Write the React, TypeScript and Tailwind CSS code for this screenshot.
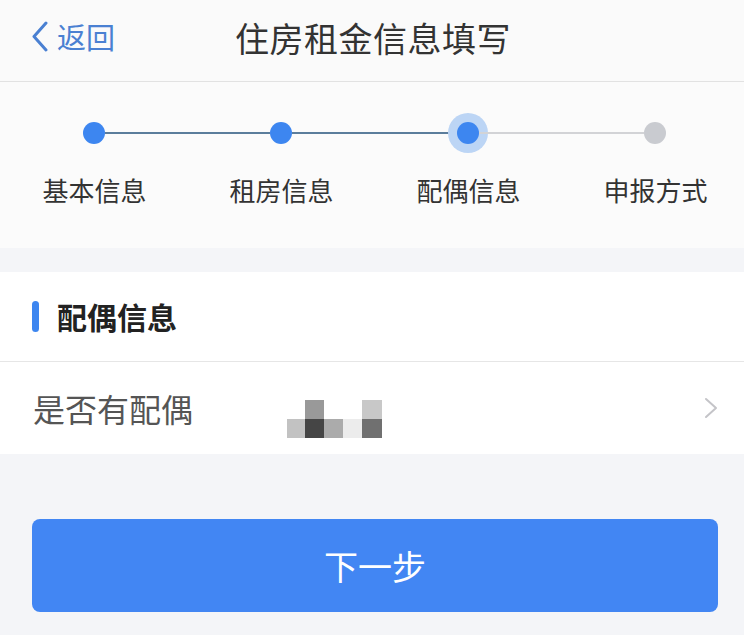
import React from "react";

const font = { fontFamily: '"Noto Sans CJK SC", "Noto Sans", sans-serif' };

function Dot({ state }: { state: "done" | "active" | "todo" }) {
  if (state === "todo") return <div className="w-[22px] h-[22px] rounded-full bg-[#c9cbd0] shrink-0" />;
  if (state === "active")
    return <div className="w-[22px] h-[22px] rounded-full bg-[#3d86f0] shrink-0 shadow-[0_0_0_9px_#bcd5f5]" />;
  return <div className="w-[22px] h-[22px] rounded-full bg-[#3d86f0] shrink-0" />;
}

export default function App() {
  const labels = ["基本信息", "租房信息", "配偶信息", "申报方式"];
  return (
    <div style={font} className="w-[744px] min-h-[635px] bg-[#f4f5f8] overflow-hidden">
      {/* Header */}
      <div className="h-[82px] pb-[8px] bg-[#fafafa] border-b border-[#e2e2e2] flex items-center relative">
        <div className="flex items-center pl-[31px] text-[#4a80d2] text-[29px] leading-none">
          <svg width="18" height="31" viewBox="0 0 18 31" className="mr-[8px]">
            <polyline points="15,2 3,15.5 15,29" fill="none" stroke="#4a80d2" strokeWidth="3" strokeLinejoin="round" strokeLinecap="round" />
          </svg>
          <span>返回</span>
        </div>
        <div className="absolute left-0 right-0 top-0 h-[75px] flex items-center justify-center pointer-events-none">
          <span className="text-[34px] text-[#333333] tracking-[0.5px] ml-[2px]">住房租金信息填写</span>
        </div>
      </div>

      {/* Steps */}
      <div className="bg-[#fbfbfb] pt-[40px] pb-[40px]">
        <div className="flex items-center pl-[83px] pr-[78px] h-[22px]">
          <Dot state="done" />
          <div className="flex-1 h-[2px] bg-[#5b7d9c]" />
          <Dot state="done" />
          <div className="flex-1 h-[2px] bg-[#5b7d9c]" />
          <Dot state="active" />
          <div className="flex-1 h-[2px] bg-[#d2d3d6]" />
          <Dot state="todo" />
        </div>
        <div className="grid grid-cols-[repeat(4,187px)] pl-[1px] mt-[28px]">
          {labels.map((l) => (
            <div key={l} className="text-center text-[26px] leading-[36px] text-[#333333]">
              {l}
            </div>
          ))}
        </div>
      </div>

      {/* Section */}
      <div className="mt-[24px] bg-white">
        <div className="h-[90px] flex items-center pl-[32px] border-b border-[#e6e6e6]">
          <div className="w-[7px] h-[31px] rounded-full bg-[#3d86f0] mr-[18px]" />
          <span className="text-[30px] font-bold text-[#222222]">配偶信息</span>
        </div>
        <div className="h-[92px] flex items-center pl-[33px] pr-[26px]">
          <span className="text-[32px] text-[#555555] w-[254px]">是否有配偶</span>
          <div className="flex flex-col mt-[22px]">
            <div className="flex">
              <div className="w-[18px] h-[19px]" />
              <div className="w-[19px] h-[19px] bg-[#999999]" />
              <div className="w-[19px] h-[19px]" />
              <div className="w-[19px] h-[19px]" />
              <div className="w-[20px] h-[19px] bg-[#c8c8c8]" />
            </div>
            <div className="flex">
              <div className="w-[18px] h-[19px] bg-[#c2c2c2]" />
              <div className="w-[19px] h-[19px] bg-[#454545]" />
              <div className="w-[19px] h-[19px] bg-[#ababab]" />
              <div className="w-[19px] h-[19px] bg-[#ececec]" />
              <div className="w-[20px] h-[19px] bg-[#707070]" />
            </div>
          </div>
          <div className="flex-1" />
          <svg width="14" height="22" viewBox="0 0 14 22">
            <polyline points="2,2 12,11 2,20" fill="none" stroke="#c4c4c8" strokeWidth="2" strokeLinejoin="round" strokeLinecap="round" />
          </svg>
        </div>
      </div>

      {/* Button */}
      <div className="pt-[65px] pl-[32px] pr-[26px]">
        <div className="h-[93px] rounded-[8px] bg-[#4286f3] flex items-center justify-center text-white text-[34px]">
          下一步
        </div>
      </div>
    </div>
  );
}
